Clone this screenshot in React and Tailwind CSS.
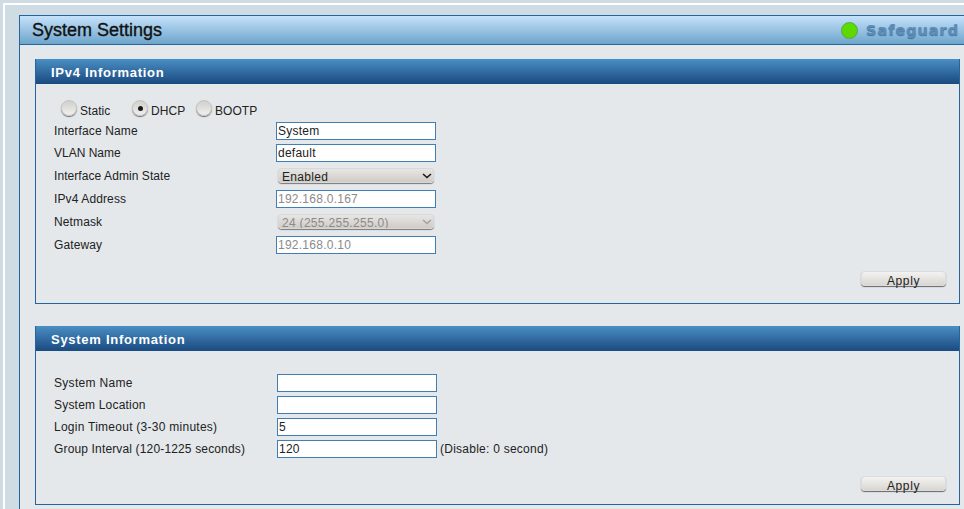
const font = { fontFamily: '"Liberation Sans", Arial, sans-serif' };

function Radio({ checked, label, gapClass }) {
  return (
    <div className={`flex items-start ${gapClass}`}>
      <span className="w-[16px] h-[16px] mt-[-2px] rounded-full bg-gradient-to-b from-[#d2cfcb] to-[#f1f0ee] border border-[#c4c4c4] shadow-[0_1px_1px_#6f6f6f] flex items-center justify-center">
        {checked && <span className="w-[5px] h-[5px] rounded-full bg-[#1a1a1a]" />}
      </span>
      <span className="text-[12px] leading-[14px] tracking-[0.05px] text-[#222] mt-[2px]">{label}</span>
    </div>
  );
}

function Field({ value = "", muted, suffix }) {
  return (
    <div className="flex items-center">
      <input
        readOnly
        value={value}
        className={`w-[160px] h-[18px] bg-white border border-[#3f7fb5] px-[1px] text-[12px] tracking-[0.25px] outline-none ${muted ? "text-[#8b8b8b]" : "text-[#222]"}`}
      />
      {suffix && <span className="ml-[3px] text-[12px] tracking-[0.25px] text-[#222]">{suffix}</span>}
    </div>
  );
}

function Select({ value, muted }) {
  return (
    <div className="relative w-[156px] h-[15px] ml-[2px]">
      <select
        disabled={muted}
        defaultValue={value}
        className={`block appearance-none w-full h-full rounded-[4px] bg-gradient-to-b from-[#e8e6e3] to-[#cfccc8] border border-[#d8d8d8] shadow-[0_1px_1px_#777] pl-[3px] pt-[2px] text-[12px] leading-[13px] tracking-[0.3px] outline-none ${muted ? "text-[#8b8b8b] opacity-100" : "text-[#222]"}`}
      >
        <option>{value}</option>
      </select>
      <svg className="absolute right-[2px] top-[5px]" width="10" height="6" viewBox="0 0 10 6" fill="none">
        <path d="M1 1l4 3.5L9 1" stroke={muted ? "#a3a3a3" : "#1a1a1a"} strokeWidth="1.6" />
      </svg>
    </div>
  );
}

function Row({ label, height, children, labelWidth = "w-[222px]", tracking = "tracking-[0.12px]" }) {
  return (
    <div className={`flex items-center ${height}`}>
      <span className={`${labelWidth} ${tracking} text-[12px] text-[#222] whitespace-nowrap`}>{label}</span>
      {children}
    </div>
  );
}

function Apply() {
  return (
    <button className="w-[85px] h-[15px] rounded-[4px] bg-gradient-to-b from-[#f4f3f1] to-[#d9d6d2] border border-[#dcdcdc] shadow-[0_1px_1px_#666] text-[12px] leading-[13px] tracking-[0.6px] text-[#222] pt-[3px]">
      Apply
    </button>
  );
}

function SectionHeader({ title }) {
  return (
    <div className="h-[25px] bg-gradient-to-b from-[#4a8fc4] to-[#1a4a80] pl-[15px] pt-[2px] flex items-center text-white font-bold text-[13px] tracking-[0.72px]">
      {title}
    </div>
  );
}

export default function App() {
  return (
    <div style={font} className="w-[964px] h-[509px] overflow-hidden bg-[#cfdce3] pt-[3px] pl-[3px]">
      <div className="h-[600px] bg-white pt-[2px] pl-[2px]">
        <div className="h-full bg-[#cfdce3] pt-[10px] pl-[14px]">
          <div className="w-[960px] h-[560px] border border-[#23659c] bg-[#e4e8eb]">
            <div className="h-[28px] bg-gradient-to-b from-[#c5e2fb] to-[#6da5cb] border-b border-[#23659c] flex items-center justify-between pl-[12px] pr-[19px] box-content">
              <span className="text-[18px] text-[#111] [-webkit-text-stroke:0.35px_#111]">System Settings</span>
              <div className="flex items-center gap-[8px]">
                <span className="w-[17px] h-[17px] rounded-full bg-gradient-to-b from-[#55e000] to-[#62d400] border border-[#5aa838]" />
                <span
                  className="text-[14.5px] leading-[20px] font-bold tracking-[0.95px] text-[#5f8cb7] [text-shadow:0_1px_1px_#3d6f9f]"
                  style={{ fontFamily: '"DejaVu Sans", sans-serif' }}
                >
                  Safeguard
                </span>
              </div>
            </div>

            <div className="pt-[14px] pl-[15px]">
              <div className="w-[925px] h-[245px] border border-[#23659c] border-t-0">
                <SectionHeader title="IPv4 Information" />
                <div className="pl-[18px] pt-[18px]">
                  <div className="flex h-[18px] pl-[7px]">
                    <Radio label="Static" gapClass="gap-[3px] w-[71px]" />
                    <Radio checked label="DHCP" gapClass="gap-[3px] w-[64px]" />
                    <Radio label="BOOTP" gapClass="gap-[3px]" />
                  </div>
                  <div className="flex flex-col">
                    <Row label="Interface Name" height="h-[22px]"><Field value="System" /></Row>
                    <Row label="VLAN Name" height="h-[22px]" tracking="tracking-[0px]"><Field value="default" /></Row>
                    <Row label="Interface Admin State" height="h-[23px]" tracking="tracking-[0.07px]"><Select value="Enabled" /></Row>
                    <Row label="IPv4 Address" height="h-[23px]"><Field value="192.168.0.167" muted /></Row>
                    <Row label="Netmask" height="h-[23px]"><Select value="24 (255.255.255.0)" muted /></Row>
                    <Row label="Gateway" height="h-[23px]"><Field value="192.168.0.10" muted /></Row>
                  </div>
                  <div className="flex justify-end pr-[13px] mt-[15px]"><Apply /></div>
                </div>
              </div>

              <div className="w-[925px] h-[179px] mt-[22px] border border-[#23659c] border-t-0">
                <SectionHeader title="System Information" />
                <div className="pl-[18px] pt-[21px]">
                  <Row label="System Name" height="h-[22px]" labelWidth="w-[223px]" tracking="tracking-[0.3px]"><Field /></Row>
                  <Row label="System Location" height="h-[22px]" labelWidth="w-[223px]" tracking="tracking-[0.2px]"><Field /></Row>
                  <Row label="Login Timeout (3-30 minutes)" height="h-[22px]" labelWidth="w-[223px]" tracking="tracking-[0.26px]"><Field value="5" /></Row>
                  <Row label="Group Interval (120-1225 seconds)" height="h-[22px]" labelWidth="w-[223px]" tracking="tracking-[0.15px]"><Field value="120" suffix="(Disable: 0 second)" /></Row>
                  <div className="flex justify-end pr-[13px] mt-[16px]"><Apply /></div>
                </div>
              </div>
            </div>
          </div>
        </div>
      </div>
    </div>
  );
}
